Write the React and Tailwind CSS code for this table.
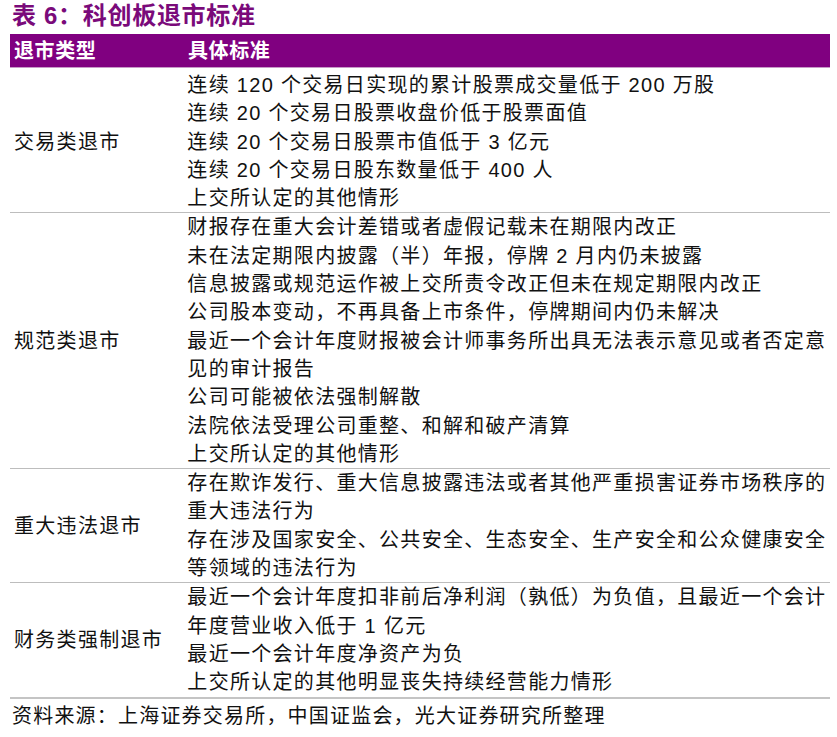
const rows = [
  {
    type: "交易类退市",
    items: [
      "连续 120 个交易日实现的累计股票成交量低于 200 万股",
      "连续 20 个交易日股票收盘价低于股票面值",
      "连续 20 个交易日股票市值低于 3 亿元",
      "连续 20 个交易日股东数量低于 400 人",
      "上交所认定的其他情形",
    ],
  },
  {
    type: "规范类退市",
    items: [
      "财报存在重大会计差错或者虚假记载未在期限内改正",
      "未在法定期限内披露（半）年报，停牌 2 月内仍未披露",
      "信息披露或规范运作被上交所责令改正但未在规定期限内改正",
      "公司股本变动，不再具备上市条件，停牌期间内仍未解决",
      "最近一个会计年度财报被会计师事务所出具无法表示意见或者否定意见的审计报告",
      "公司可能被依法强制解散",
      "法院依法受理公司重整、和解和破产清算",
      "上交所认定的其他情形",
    ],
  },
  {
    type: "重大违法退市",
    items: [
      "存在欺诈发行、重大信息披露违法或者其他严重损害证券市场秩序的重大违法行为",
      "存在涉及国家安全、公共安全、生态安全、生产安全和公众健康安全等领域的违法行为",
    ],
  },
  {
    type: "财务类强制退市",
    items: [
      "最近一个会计年度扣非前后净利润（孰低）为负值，且最近一个会计年度营业收入低于 1 亿元",
      "最近一个会计年度净资产为负",
      "上交所认定的其他明显丧失持续经营能力情形",
    ],
  },
];

const App = () => {
  return (
    <div className="w-[837px] h-[737px] bg-white text-[#111] font-['Liberation_Sans','Noto_Sans_CJK_SC',sans-serif]">
      <h1 className="pl-[12px] h-[34px] leading-[32px] text-[24px] tracking-[0.7px] font-bold text-[#7a0a7a]">
        表 6：科创板退市标准
      </h1>

      <div className="mx-[10px] w-[820px]">
        <div className="flex h-[34px] items-center bg-[#800080] border-b border-[#c79ac7] text-white text-[20px] tracking-[0.6px] font-bold">
          <div className="w-[178px] pl-[4px]">退市类型</div>
          <div>具体标准</div>
        </div>

        {rows.map((row, i) => (
          <div
            key={row.type}
            className={
              i === 0
                ? "flex pt-[3px] border-b border-[#bdbdbd] text-[20px] tracking-[1.3px]"
                : i === rows.length - 1
                ? "flex border-b-2 border-[#c4c4c4] text-[20px] tracking-[1.3px]"
                : "flex border-b border-[#bdbdbd] text-[20px] tracking-[1.3px]"
            }
          >
            <div className="w-[178px] pl-[4px] flex items-center">{row.type}</div>
            <div className="w-[645px] leading-[28.3px]">
              {row.items.map((t) => (
                <p key={t}>{t}</p>
              ))}
            </div>
          </div>
        ))}
      </div>

      <p className="pl-[12px] pt-[3px] text-[20px] tracking-[1.2px] leading-[28px]">
        资料来源：上海证券交易所，中国证监会，光大证券研究所整理
      </p>
    </div>
  );
};

export default App;
